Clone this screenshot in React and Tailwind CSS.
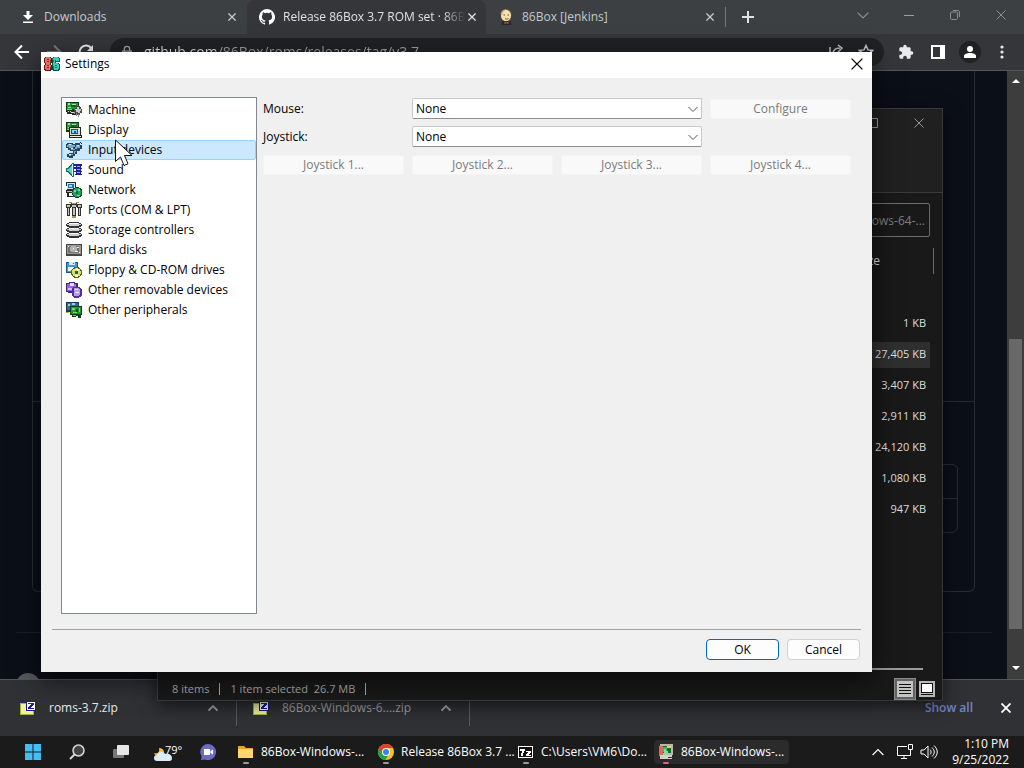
import React from "react";

const Svg = ({ size = "size-4", box = "0 0 16 16", children, crisp = false }) => (
  <svg className={`${size} shrink-0`} viewBox={box} fill="none" aria-hidden="true" shapeRendering={crisp ? "crispEdges" : "auto"}>
    {children}
  </svg>
);

const Cross = ({ size = "size-2.5", width = 1 }) => (
  <Svg size={size} box="0 0 10 10"><path d="M.5.5l9 9M9.5.5l-9 9" stroke="currentColor" strokeWidth={width} /></Svg>
);

const Chevron = ({ up = false, size = "size-2.5", width = 1 }) => (
  <Svg size={size} box="0 0 10 10"><path d={up ? "M.5 7.500L5 3l4.500 4.500" : "M.5 3L5 7.500 9.500 3"} stroke="currentColor" strokeWidth={width} /></Svg>
);

const GithubMark = () => (
  <Svg><path fill="#fff" d="M8 0a8 8 0 0 0-2.530 15.590c.4.070.55-.17.55-.38l-.010-1.490c-2.010.37-2.530-.49-2.690-.94-.09-.23-.48-.94-.82-1.130-.28-.15-.68-.52-.01-.53.63-.01 1.080.58 1.230.82.72 1.210 1.870.87 2.330.66.07-.52.28-.87.51-1.070-1.780-.2-3.640-.89-3.640-3.950 0-.87.31-1.590.82-2.150-.08-.2-.36-1.020.08-2.120 0 0 .67-.21 2.200.82a7.400 7.400 0 0 1 4 0c1.530-1.040 2.200-.82 2.200-.82.44 1.100.16 1.920.08 2.120.51.56.82 1.270.82 2.150 0 3.070-1.870 3.750-3.650 3.950.29.25.54.73.54 1.480l-.010 2.200c0 .21.15.46.55.38A8 8 0 0 0 8 0z" /></Svg>
);

const Jenkins = () => (
  <Svg>
    <path d="M2.500 7C1.500 2 5 0 8 0s6.500 2 5.500 7l-2 5H4z" fill="#6a5138" />
    <ellipse cx="8" cy="6.500" rx="5" ry="5.800" fill="#f5e1b0" />
    <path d="M3 5.500C3 1.500 6 .5 8.500.5 5.500 1.500 5 4 4 6.500z" fill="#c9b68c" />
    <path d="M5.500 6h1.500M9.500 6H11M7 9.500c1 .8 2.500.8 3.500 0" stroke="#6a4c36" />
    <path d="M3.500 12.500L8 12l4.500.5 1 3.500H4z" fill="#26282b" />
    <path d="M6.500 12.500l2 1 2-1v2.500l-2-1-2 1z" fill="#c6653c" />
  </Svg>
);

const BoxLogo = () => (
  <Svg crisp>
    <path d="M1 1h6v1h1v5H7v2h1v5H7v1H1v-1H0V9h1V7H0V2h1z" fill="#5e1a15" />
    <path d="M2 1h4v1h1v5H6v2h1v4H6v1H2v-1H1V9h1V7H1V2h1z" fill="#ea6b5d" />
    <path d="M3 3h2v1H3zM3 5h2v1H3zM3 9h2v1H3zM3 11h2v1H3zM6 4h1v3H6zM6 11h1v2H6z" fill="#8c2b23" />
    <path d="M9 1h6v1h1v4h-4v1h3v1h1v6h-1v1H9v-1H8V2h1z" fill="#074f4a" />
    <path d="M10 1h4v1h1v3h-3V4h-1v3h3v1h1v5h-1v1h-4v-1H9V2h1z" fill="#35cfb3" />
    <path d="M11 9h2v1h-2zM11 11h2v1h-2zM9 10h1v3H9zM9 4h1v2H9z" fill="#0b7a6c" />
  </Svg>
);

const Board = () => (
  <g>
    <path d="M0 0h13v10H0z" fill="#0c3a12" />
    <path d="M1 1h11v6H1z" fill="#27973a" />
    <path d="M2 1h2v2H2zM6 2h4v1H6zM2 5h3v1H2z" fill="#a6e6a1" />
    <path d="M5 3h6v2H5z" fill="#136024" />
    <path d="M1 7h5v1H1z" fill="#c9b14a" />
  </g>
);

const treeIcons = {
  Machine: (
    <Svg crisp>
      <Board />
      <path d="M1 8h6v3h3v2H6v-1H1z" fill="#292929" />
      <path d="M2 9h1v1H2zM4 9h1v1H4zM5 10h3v1H5z" fill="#e0e0e0" />
      <path d="M10 4h4v1h1v2h1v4h-2v2h-3v-2H9V9H8V7h1V6h1z" fill="#4b4b4b" />
      <path d="M11 5h2v2h2v2h-1v2h-2v-1h-2V8H9V7h2z" fill="#c9c9c9" />
      <path d="M8 10h1v2H8zM10 11h1v3h-1zM12 12h1v3h-1z" fill="#898989" />
    </Svg>
  ),
  Display: (
    <Svg crisp>
      <Board />
      <path d="M3 5h12v8h1v3H3z" fill="#222" />
      <path d="M4 6h10v7H4z" fill="#dddacb" />
      <path d="M5 7h7v5H5z" fill="#15557a" /><path d="M6 8h5v3H6z" fill="#7bdcec" /><path d="M8 9h2v2H8z" fill="#205a91" />
      <path d="M13 7h1v1h-1zM4 14h11v1H4z" fill="#f5f3e9" />
    </Svg>
  ),
  "Input devices": (
    <Svg crisp>
      <path d="M1 1h6v1h2V1h5v2h2v4h-2v2h-3v3h-2v2H7v2H3v-1H1v-3h2v-1h4V9H4V8H2V6H0V2h1z" fill="#26445e" />
      <path d="M2 2h4v1h3v2H7v1H3V5H1V3h1zM10 3h4v3h-3v1H9V5h1zM5 7h4v1H5zM8 9h2v1H9v2H8zM3 12h4v1H5v1H3z" fill="#79aacb" />
      <path d="M3 2h2v1H3zM11 3h2v1h-2zM5 6h2v1H5zM3 12h2v1H3z" fill="#d8effa" />
      <path d="M14 0h1v1h-1zM15 1h1v1h-1z" fill="#222" />
    </Svg>
  ),
  Sound: (
    <Svg crisp>
      <path d="M0 6h2V5h1V4h1V3h1V2h1V1h2v14H6v-1H5v-1H4v-1H3v-1H2v-1H0z" fill="#176966" />
      <path d="M1 7h2V6h1V5h1V4h1v8H5v-1H4v-1H3V9H1z" fill="#59d6c8" /><path d="M6 2h1v12H6z" fill="#d0f7f0" />
      <path d="M8 2h8v2h-1v2h1v1h-1v2h1v1h-1v2h1v1H9v-1h1v-2H8V9h2V7H8V5h2V4H8z" fill="#1d2096" />
      <path d="M11 4h3v1h-3zM11 7h3v1h-3zM11 10h3v1h-3z" fill="#9ba5f0" />
    </Svg>
  ),
  Network: (
    <Svg crisp>
      <path d="M0 0h10v8h1v3H0V8h1z" fill="#24282c" /><path d="M1 1h8v6H1z" fill="#dedfe0" />
      <path d="M2 2h6v4H2z" fill="#1577a3" /><path d="M3 3h3v2H3z" fill="#8be4ee" /><path d="M1 9h8v1H1z" fill="#bbb" />
      <path d="M1 11h2v3h5v1H1z" fill="#222" />
      <circle cx="11" cy="10.500" r="5.500" fill="#15442d" /><circle cx="11" cy="10.500" r="4.500" fill="#25a15a" />
      <path d="M8 8h2v2H8zM12 7h2v2h-2zM11 13h3v1h-3z" fill="#75d5c4" /><path d="M10 9h2v3h-2z" fill="#17653b" />
    </Svg>
  ),
  "Ports (COM & LPT)": (
    <Svg crisp>
      <path d="M0 2h5v4H4v8H1V6H0zM11 2h5v4h-1v8h-3V6h-1zM5 1h6v4h-1v9H6V5H5z" fill="#33332f" />
      <path d="M1 3h3v2H1zM12 3h3v2h-3zM2 6h1v7H2zM13 6h1v7h-1zM6 3h4v2H6zM7 6h2v7H7z" fill="#c4c4be" />
      <path d="M3 0h3v1H3zM10 0h3v1h-3zM6 1h4v1H6zM6 14h4v2H6z" fill="#a59b51" />
    </Svg>
  ),
  "Storage controllers": (
    <Svg crisp>
      {[0, 5, 10].map((y) => (
        <g key={y} transform={`translate(0 ${y})`}>
          <path d="M3 0h10v1h2v1h1v2h-1v1h-2v1H3V5H1V4H0V2h1V1h2z" fill="#333" />
          <path d="M3 1h10v1h2v1h-2v1H3V3H1V2h2z" fill="#d0d0d0" /><path d="M3 1h9v1H3z" fill="#fff" />
        </g>
      ))}
    </Svg>
  ),
  "Hard disks": (
    <Svg crisp>
      <path d="M0 2h16v12H0z" fill="#454541" /><path d="M1 3h14v9H1z" fill="#9a9993" />
      <path d="M2 4h11v7H2z" fill="#74736d" /><path d="M5 4h5v1h1v4h-1v1H5V9H4V5h1z" fill="#b5b5af" />
      <path d="M7 6h1v1H7zM11 5h2v1h-2zM9 9h3v1H9zM2 4h1v1H2zM13 10h1v1h-1z" fill="#f0f0ee" />
    </Svg>
  ),
  "Floppy & CD-ROM drives": (
    <Svg crisp>
      <path d="M0 0h11l1 1v10H0z" fill="#155c85" /><path d="M1 1h10v9H1z" fill="#3a9fce" />
      <path d="M3 0h6v3H3z" fill="#d4ecf5" /><path d="M7 1h1v1H7z" fill="#155c85" /><path d="M2 5h7v4H2z" fill="#eef8fb" />
      <circle cx="10.500" cy="10.500" r="5.500" fill="#62621f" /><circle cx="10.500" cy="10.500" r="4.500" fill="#d6df68" />
      <path d="M10 6l4 2-3 2zM11 11l1 4-4-1z" fill="#f8fbcf" /><circle cx="10.500" cy="10.500" r="1.500" fill="#315e42" />
    </Svg>
  ),
  "Other removable devices": (
    <Svg crisp>
      <path d="M0 1h3V0h6v1h3v10H2v-1H0z" fill="#442784" /><path d="M1 2h9v7H1z" fill="#9466db" />
      <path d="M4 1h4v3H4z" fill="#e5d9fa" /><path d="M2 6h5v2H2z" fill="#d2bdf5" />
      <path d="M7 5h7v1h1v1h1v7h-1v1h-2v1H8v-1H7v-1H6V6h1z" fill="#50329b" />
      <path d="M8 6h5v1h1v6h-1v1H8z" fill="#b79bea" /><path d="M9 7h3v1H9zM9 10h4v1H9z" fill="#f1e9ff" />
    </Svg>
  ),
  "Other peripherals": (
    <Svg crisp>
      <path d="M0 0h13v10H0z" fill="#123b4a" /><path d="M1 1h11v7H1z" fill="#2f6f96" />
      <path d="M2 2h2v2H2zM6 1h3v2H6z" fill="#a4cddb" />
      <path d="M4 4h12v9h-1v3h-3v-2h-2v1H6v-2H4z" fill="#123d16" /><path d="M5 5h10v7H5z" fill="#23963a" />
      <path d="M6 6h3v2H6zM7 10h4v1H7zM13 6h1v4h-1z" fill="#74d872" /><path d="M10 7h2v3h-2z" fill="#0f4a1a" /><path d="M0 10h3v1H0zM7 13h3v1H7z" fill="#c2a744" />
    </Svg>
  ),
};

const ZipIcon = () => (
  <Svg crisp>
    <path d="M0 3h6v1h8v11H0z" fill="#a7b04c" /><path d="M1 4h5v1h7v9H1z" fill="#eef39a" />
    <path d="M6 1h10v10H6z" fill="#1d1d80" /><path d="M7 2h8v8H7z" fill="#fff" />
    <path d="M8 3h6v2h-1v1h-1v1h-1v1h3v1H8V7h1V6h1V5h1V4H8z" fill="#1d1da8" />
  </Svg>
);

const Cursor = () => (
  <svg className="pointer-events-none absolute top-[139px] left-[115px] h-7 w-[18px]" viewBox="0 0 18 28" aria-hidden="true">
    <path d="M.5 1v21.500l5-4.500 3.500 8.500 4-1.700-3.500-8.300H17z" fill="#fff" stroke="#111" />
  </svg>
);

function Tab({ icon, title, active }) {
  return (
    <div role="tab" aria-selected={!!active} className={`flex h-full w-[239px] min-w-0 items-center rounded-t-lg pr-[9px] pl-3 ${active ? "bg-[#35363a] text-[#dfe1e5]" : "text-[#c6c9cd]"}`}>
      <span className="flex w-4 shrink-0 justify-center">{icon}</span>
      <span className={`ml-2 flex-1 whitespace-nowrap ${active ? "[mask-image:linear-gradient(to_right,black_88%,transparent)]" : ""}`}>{title}</span>
      <button aria-label={`Close ${title}`} className="ml-0.5 flex size-3 items-center justify-center"><Cross size="size-2" width={1.600} /></button>
    </div>
  );
}

function BrowserHeader() {
  return (
    <header className="shrink-0 text-[#dfe1e5]">
      <div className="flex h-[34px] items-center bg-[#3c4043] pl-2">
        <div role="tablist" className="flex h-full min-w-0">
          <Tab title="Downloads" icon={<Svg size="size-3" box="0 0 12 12"><path d="M4.500 0h3v4H11L6 9 1 4h3.500zM1 10.500h10V12H1z" fill="#fff" /></Svg>} />
          <Tab active title="Release 86Box 3.7 ROM set · 86B" icon={<GithubMark />} />
          <Tab title="86Box [Jenkins]" icon={<Jenkins />} />
        </div>
        <span className="h-5 w-px bg-[#77797c]" />
        <button aria-label="New tab" className="flex w-11 justify-center"><Svg size="size-3" box="0 0 12 12"><path d="M6 0v12M0 6h12" stroke="currentColor" strokeWidth="2" /></Svg></button>
        <div className="ml-auto flex pb-1 text-[#8b8e91]">
          <button aria-label="Search tabs" className="flex w-[46px] items-center justify-center"><Chevron size="size-3" /></button>
          <button aria-label="Minimize" className="flex w-[46px] items-center justify-center"><span className="h-px w-2.5 bg-[#9b9da0]" /></button>
          <button aria-label="Restore" className="flex w-[46px] items-center justify-center"><Svg size="size-2.5" box="0 0 10 10"><path d="M.5 3c0-.5.500-1 1-1h5c.5 0 1 .5 1 1v5.500c0 .5-.5 1-1 1h-5c-.5 0-1-.5-1-1zM3 .5h5c1 0 1.500.5 1.500 1.500v5" stroke="currentColor" /></Svg></button>
          <button aria-label="Close browser" className="flex w-[46px] items-center justify-center"><Cross /></button>
        </div>
      </div>
      <div className="flex h-[37px] items-center border-b border-[#55565a] bg-[#35363a] px-1.5">
        <button aria-label="Back" className="flex w-8 justify-center"><Svg><path d="M15 8H2M8 1.500L1.500 8 8 14.500" stroke="#fff" strokeWidth="2" /></Svg></button>
        <button aria-label="Forward" className="flex w-8 justify-center"><Svg><path d="M1 8h13M8 1.500L14.500 8 8 14.500" stroke="#77797c" strokeWidth="2" /></Svg></button>
        <button aria-label="Reload" className="flex w-8 justify-center"><Svg><path d="M13.500 4.500A6.500 6.500 0 1 0 14.500 9" stroke="#e8eaed" strokeWidth="2" /><path d="M15 1v6H9z" fill="#e8eaed" /></Svg></button>
        <div className="ml-2 flex h-7 flex-1 items-center gap-2.5 rounded-full bg-[#202124] px-2.5 text-[#9aa0a6]">
          <Svg size="size-3.5"><path d="M3 7h10v8H3zM5 7V4.500a3 3 0 0 1 6 0V7" stroke="currentColor" strokeWidth="1.500" /></Svg>
          <input aria-label="Address" readOnly value="github.com/86Box/roms/releases/tag/v3.7" className="min-w-0 flex-1 bg-[linear-gradient(to_right,#dfe1e5_72px,#9aa0a6_72px)] bg-clip-text text-sm text-transparent" />
          <Svg><path d="M2 3v11h11M5 10c0-4 3-6 7-6M10 1l4 3-4 4" stroke="#bdc1c6" strokeWidth="1.500" /></Svg>
          <span className="pl-1"><Svg><path d="M8 1.500l2 4.400 4.700.5-3.500 3.200 1 4.700L8 11.900l-4.200 2.400 1-4.700L1.300 6.400 6 5.900z" stroke="#bdc1c6" strokeWidth="1.500" /></Svg></span>
        </div>
        <button aria-label="Extensions" className="ml-1.5 flex w-8 justify-center"><Svg box="0 0 24 24"><path fill="#e8eaed" d="M20.500 11H19V7c0-1.100-.9-2-2-2h-4V3.500a2.500 2.500 0 0 0-5 0V5H4c-1.100 0-1.990.9-1.990 2v3.800H3.500c1.490 0 2.700 1.210 2.700 2.700s-1.210 2.700-2.700 2.700H2V20c0 1.100.9 2 2 2h3.800v-1.500c0-1.490 1.210-2.700 2.700-2.700s2.700 1.210 2.700 2.700V22H17c1.100 0 2-.9 2-2v-4h1.500a2.500 2.500 0 0 0 0-5z" /></Svg></button>
        <button aria-label="Side panel" className="flex w-8 justify-center"><Svg size="size-3.5" box="0 0 14 14"><path d="M1 1h12v12H1z" stroke="#fff" strokeWidth="2" /><path d="M9 1h4v12H9z" fill="#fff" /></Svg></button>
        <button aria-label="Profile" className="flex w-8 justify-center"><span className="flex size-[22px] items-center justify-center rounded-full bg-[#202124]"><Svg size="size-3" box="0 0 12 12"><circle cx="6" cy="3" r="3" fill="#fff" /><path d="M0 12v-2c0-2 3-3 6-3s6 1 6 3v2z" fill="#fff" /></Svg></span></button>
        <button aria-label="Menu" className="flex w-8 justify-center"><Svg><circle cx="8" cy="3" r="1.600" fill="#e8eaed" /><circle cx="8" cy="8" r="1.600" fill="#e8eaed" /><circle cx="8" cy="13" r="1.600" fill="#e8eaed" /></Svg></button>
      </div>
    </header>
  );
}

function WebPage() {
  return (
    <main className="flex min-h-0 flex-1 bg-[#0b0f17]">
      <div className="flex min-w-0 flex-1 flex-col overflow-hidden pr-[15px] pl-4">
        <div className="mr-[17px] ml-4 flex h-[521px] shrink-0 flex-col rounded-b-md border-x border-b border-[#272c34]">
          <div className="h-[331px] shrink-0 border-b border-[#272c34]" />
          <div className="mx-4 mt-[62px] h-[69px] rounded-md border border-[#272c34]"><div className="h-[34px] border-b border-[#272c34]" /></div>
        </div>
        <div className="mt-10 shrink-0 border-t border-[#1a1f27] pt-10"><div className="size-6 rounded-full bg-[#54575b]" /></div>
      </div>
      <div className="flex w-[17px] flex-col items-center justify-between bg-[#3d3d3d] py-1.5">
        <Svg size="size-2" box="0 0 8 8"><path d="M0 6l4-4 4 4z" fill="#fff" /></Svg>
        <div className="mt-[254px] w-[13px] flex-1 bg-[#686868]" />
        <div className="h-9 shrink-0" />
        <Svg size="size-2" box="0 0 8 8"><path d="M0 1l4 4 4-4z" fill="#fff" /></Svg>
      </div>
    </main>
  );
}

function Download({ name, dim }) {
  return (
    <div className={`flex w-[233px] items-center border-r border-[#5a5c5f] pr-[18px] pl-4 ${dim ? "text-[#a3a5a8]" : "text-[#e8eaed]"}`}>
      <ZipIcon />
      <span className="ml-[13px] flex-1 whitespace-nowrap">{name}</span>
      <button aria-label={`Options for ${name}`} className="text-[#a3a5a8]"><Chevron up width={1.800} /></button>
    </div>
  );
}

const sizes = ["1 KB", "27,405 KB", "3,407 KB", "2,911 KB", "24,120 KB", "1,080 KB", "947 KB"];

function Explorer() {
  return (
    <section aria-label="File Explorer" className="absolute top-[108px] right-[81px] bottom-[67px] left-[157px] flex flex-col border border-[#393939] bg-[#191919] text-[11px] text-[#dedede] shadow-[0_4px_16px_rgba(0,0,0,0.6)]">
      <div className="flex h-[84px] shrink-0 items-start justify-end border-b border-[#3b3b3b] bg-[#202020] text-[#999]">
        <button aria-label="Maximize" className="flex h-7 w-[46px] items-center justify-center"><Svg size="size-2.5" box="0 0 10 10"><path d="M.5.5h9v9h-9z" stroke="currentColor" /></Svg></button>
        <button aria-label="Close File Explorer" className="flex h-7 w-[46px] items-center justify-center"><Cross /></button>
      </div>
      <div className="flex shrink-0 justify-end pt-2.5 pr-3">
        <input aria-label="Search" placeholder="Search 86Box-Windows-64-..." className="h-[34px] w-[184px] rounded-xs border border-[#6c6c6c] bg-transparent pr-1 text-right text-xs placeholder:text-[#7d7d7d]" />
      </div>
      <table className="mt-[11px] mr-2 ml-auto w-40 text-right text-xs">
        <thead><tr className="h-[26px]"><th className="border-r border-[#6c6c6c] pr-[53px] font-normal">Size</th></tr></thead>
      </table>
      <table className="mt-[34px] mr-3 ml-auto w-40 text-right">
        <tbody>
          {sizes.map((s, i) => (
            <tr key={s} className="h-[31px]"><td className="p-0"><div className={`flex h-[26px] items-center justify-end pr-1 ${i === 1 ? "bg-[#2f2f2f]" : ""}`}>{s}</div></td></tr>
          ))}
        </tbody>
      </table>
      <div className="mt-auto mr-[19px] h-0.5 shrink-0 bg-[#9a9a9a]" />
      <div className="flex h-[30px] shrink-0 items-center pt-2 pr-1 pl-3.5 text-[#a9a9a9]">
        <span>8 items</span><span className="mx-2.5 h-3 w-px bg-[#a9a9a9]" />
        <span>1 item selected&nbsp; 26.7 MB</span><span className="ml-2.5 h-3 w-px bg-[#a9a9a9]" />
        <button aria-label="Details view" className="ml-auto flex size-[22px] items-center justify-center border border-[#8b8b8b] bg-[#636363]"><Svg crisp><path d="M0 0h16v16H0z" fill="#c4c4c4" /><path d="M2 3h12M2 6h12M2 9h12M2 12h12" transform="translate(0 .5)" stroke="#111" /></Svg></button>
        <button aria-label="Large icons view" className="flex size-[22px] items-center justify-center"><Svg crisp><path d="M0 0h16v16H0z" fill="#b9b9b9" /><path d="M2 2h12v10H2z" fill="#111" /><path d="M3 3h10v8H3z" fill="#fff" /><path d="M2 13h12v1H2z" fill="#111" /></Svg></button>
      </div>
    </section>
  );
}

const disabledButton = "h-5 rounded-xs border border-[#f4f4f4] bg-[#f9f9f9] text-[#7b7b7b]";

function Field({ id, label }) {
  return (
    <>
      <label htmlFor={id} className="self-center">{label}</label>
      <div className="relative col-span-2 flex h-[21px] self-end">
        <select id={id} className="h-full w-full appearance-none rounded-xs border border-[#c9c9c9] border-b-[#8c8c8c] bg-white pl-[3px] text-black"><option>None</option></select>
        <span className="pointer-events-none absolute inset-y-0 right-1 flex items-center text-[#555]"><Chevron /></span>
      </div>
    </>
  );
}

function SettingsDialog() {
  return (
    <section role="dialog" aria-label="Settings" className="absolute top-[52px] right-[152px] bottom-24 left-[41px] flex flex-col bg-[#f0f0f0] text-black shadow-[0_8px_24px_rgba(0,0,0,0.6)]">
      <div className="flex h-[26px] shrink-0 items-center bg-white pr-[9px] pb-0.5 pl-[3px]">
        <BoxLogo />
        <h1 className="ml-[5px] flex-1">Settings</h1>
        <button aria-label="Close settings" className="flex size-3 items-center justify-center"><Cross size="size-3" width={1.100} /></button>
      </div>
      <div className="flex min-h-0 flex-1 gap-1.5 pt-[19px] pr-[21px] pl-5">
        <ul className="w-[196px] shrink-0 border border-[#828790] bg-white py-0.5">
          {Object.entries(treeIcons).map(([name, icon]) => (
            <li key={name}>
              <button className={`flex h-5 w-full items-center gap-1.5 border pl-[3px] text-left whitespace-nowrap ${name === "Input devices" ? "rounded-xs border-[#99d1ff] bg-[#cce8ff]" : "border-transparent"}`}>{icon}{name}</button>
            </li>
          ))}
        </ul>
        <form className="grid flex-1 auto-rows-[20px] grid-cols-4 gap-2 pt-0.5">
          <Field id="mouse" label="Mouse:" />
          <button type="button" disabled className={disabledButton}>Configure</button>
          <Field id="joystick" label="Joystick:" />
          <span />
          {[1, 2, 3, 4].map((n) => <button key={n} type="button" disabled className={disabledButton}>Joystick {n}...</button>)}
        </form>
      </div>
      <footer className="mx-[11px] mt-[15px] flex shrink-0 justify-end gap-2 border-t border-[#a0a0a0] pt-[9px] pr-px pb-3">
        <button className="h-[21px] w-[73px] rounded-sm border border-[#0067c0] bg-[#fdfdfd]">OK</button>
        <button className="h-[21px] w-[73px] rounded-sm border border-[#d0d0d0] bg-[#fdfdfd]">Cancel</button>
      </footer>
    </section>
  );
}

const Folder = () => <Svg><path d="M0 2h6l2 2h7v10H0z" fill="#e5a52d" /><path d="M0 5h15v9H0z" fill="#ffd768" /></Svg>;
const Chrome = () => (
  <Svg>
    <circle cx="8" cy="8" r="8" fill="#fbc116" />
    <path d="M8 8L1.070 4A8 8 0 0 0 7.500 16L11 10z" fill="#24a148" /><path d="M1.070 4A8 8 0 0 1 14.930 4H8z" fill="#e33b2e" />
    <path d="M1.070 4L4.500 10 8 4z" fill="#e33b2e" />
    <circle cx="8" cy="8" r="4" fill="#fff" /><circle cx="8" cy="8" r="3" fill="#3f7fe8" />
  </Svg>
);
const SevenZip = () => (
  <Svg crisp><path d="M0 2h15v12H0z" fill="#fff" /><path d="M1 3h13v10H1z" fill="#111" /><path d="M2 5h5v2H6v2H5v3H3V9h1V7H2zM8 7h5v2h-1v1h-1v1h2v1H8v-2h1V9h1V8H8z" fill="#fff" /></Svg>
);
const BoxApp = () => (
  <Svg crisp>
    <path d="M2 0h13v11H2z" fill="#b9b8aa" /><path d="M4 2h9v7H4z" fill="#126a3b" />
    <path d="M1 2h4v3h3v3H5v4H1z" fill="#dc6960" /><path d="M5 3h4v5H5z" fill="#32bd66" /><path d="M9 2h4v2H9z" fill="#ebd363" />
    <path d="M6 5h2v2h2v2H8v2H6z" fill="#7ee29b" />
    <path d="M2 11h12v4H2z" fill="#d4d2c6" /><path d="M10 13h4v1h-4z" fill="#333" />
  </Svg>
);

function Task({ icon, label, active, width }) {
  return (
    <button className={`flex h-6 items-center gap-[7px] rounded-sm pl-1 whitespace-nowrap ${width} ${active ? "bg-[#2b2b2b]" : ""}`}>
      <span className="relative flex">{icon}<span className={`absolute -bottom-1 left-1/2 h-0.5 w-1.5 -translate-x-1/2 rounded-full ${active ? "bg-[#d7687b]" : "bg-[#999]"}`} /></span>
      {label}
    </button>
  );
}

function Taskbar() {
  return (
    <nav className="flex h-8 shrink-0 items-center bg-[#1b1b1b] text-white">
      <div className="flex items-center gap-7 pl-[25px]">
        <button aria-label="Start"><Svg><path d="M0 0h7.500v7.500H0zM8.500 0H16v7.500H8.500zM0 8.500h7.500V16H0zM8.500 8.500H16V16H8.500z" fill="#45bdf2" /></Svg></button>
        <button aria-label="Search Windows"><Svg><circle cx="9.500" cy="6.500" r="5.500" fill="#444" stroke="#d8d8d8" strokeWidth="1.500" /><path d="M5.500 10.500L1 15" stroke="#d8d8d8" strokeWidth="2" /></Svg></button>
        <button aria-label="Task view"><Svg><rect y="5" width="11" height="9" rx="1" fill="#777" /><rect x="4" y="1" width="12" height="10" rx="1" fill="#e6e6e6" /></Svg></button>
      </div>
      <button aria-label="Weather" className="ml-6 flex w-8 items-start text-[11px]">
        <Svg size="h-5 w-5" box="0 0 20 20"><path d="M6 6c1 4-1 6-5 5 2 5 9 4 10-1 0-2-2-4-5-4z" fill="#f8bd3b" /><path d="M4 19a3 3 0 0 1 0-6c1-4 7-4 8-1 4-1 7 1 7 4s-2 3-4 3z" fill="#dcebf8" /></Svg>
        <span className="-ml-2 leading-4">79°</span>
      </button>
      <button aria-label="Chat" className="ml-[15px]"><Svg><path d="M8 0a8 8 0 1 1-3 15.400L1 16l.7-3.500A8 8 0 0 1 8 0z" fill="#6d6bc5" /><path d="M4 5h6v6H4zM10.500 7L13 5.500v5L10.500 9z" fill="#fff" /></Svg></button>
      <div className="ml-[18px] flex min-w-0 items-center">
        <Task icon={<Folder />} label="86Box-Windows-..." width="w-[140px]" />
        <Task icon={<Chrome />} label="Release 86Box 3.7 ..." width="w-[140px]" />
        <Task icon={<SevenZip />} label="C:\Users\VM6\Do..." width="w-[140px]" />
        <Task active icon={<BoxApp />} label="86Box-Windows-..." width="w-[135px]" />
      </div>
      <div className="ml-auto flex items-center pr-[15px]">
        <button aria-label="Hidden icons" className="mr-3"><Chevron up size="size-3" /></button>
        <Svg size="h-4 w-[18px]" box="0 0 18 16"><path d="M11 2.500H1.500v9h13V7M5 14.500h6M8 11.500v3" stroke="#fff" /><path d="M12.500.5h4v5h-4zM14.500 5.500v4" stroke="#fff" /></Svg>
        <span className="ml-1.5 flex"><Svg size="h-4 w-[18px]" box="0 0 18 16"><path d="M1 6h3l4-4v12l-4-4H1zM10 5.500c1.500 1.500 1.500 3.500 0 5M12 3.500c3 3 3 6 0 9M14 1.500c4.300 4 4.300 9 0 13" stroke="#fff" /></Svg></span>
        <time className="ml-3.5 text-right leading-4">1:10 PM<br />9/25/2022</time>
      </div>
    </nav>
  );
}

export default function App() {
  return (
    <div className="relative flex h-screen flex-col overflow-hidden bg-[#0b0f17] font-['Open_Sans','Noto_Sans',sans-serif] text-xs">
      <BrowserHeader />
      <WebPage />
      <aside className="flex h-[57px] shrink-0 items-center border-t border-[#55565a] bg-[#2f3135]">
        <div className="flex h-9 pl-1"><Download name="roms-3.7.zip" /><Download dim name="86Box-Windows-6....zip" /></div>
        <a href="#downloads" className="ml-auto font-semibold text-[#7385cc]">Show all</a>
        <button aria-label="Close downloads bar" className="mr-[13px] ml-7 flex text-white"><Cross width={1.800} /></button>
      </aside>
      <Taskbar />
      <Explorer />
      <SettingsDialog />
      <Cursor />
    </div>
  );
}
